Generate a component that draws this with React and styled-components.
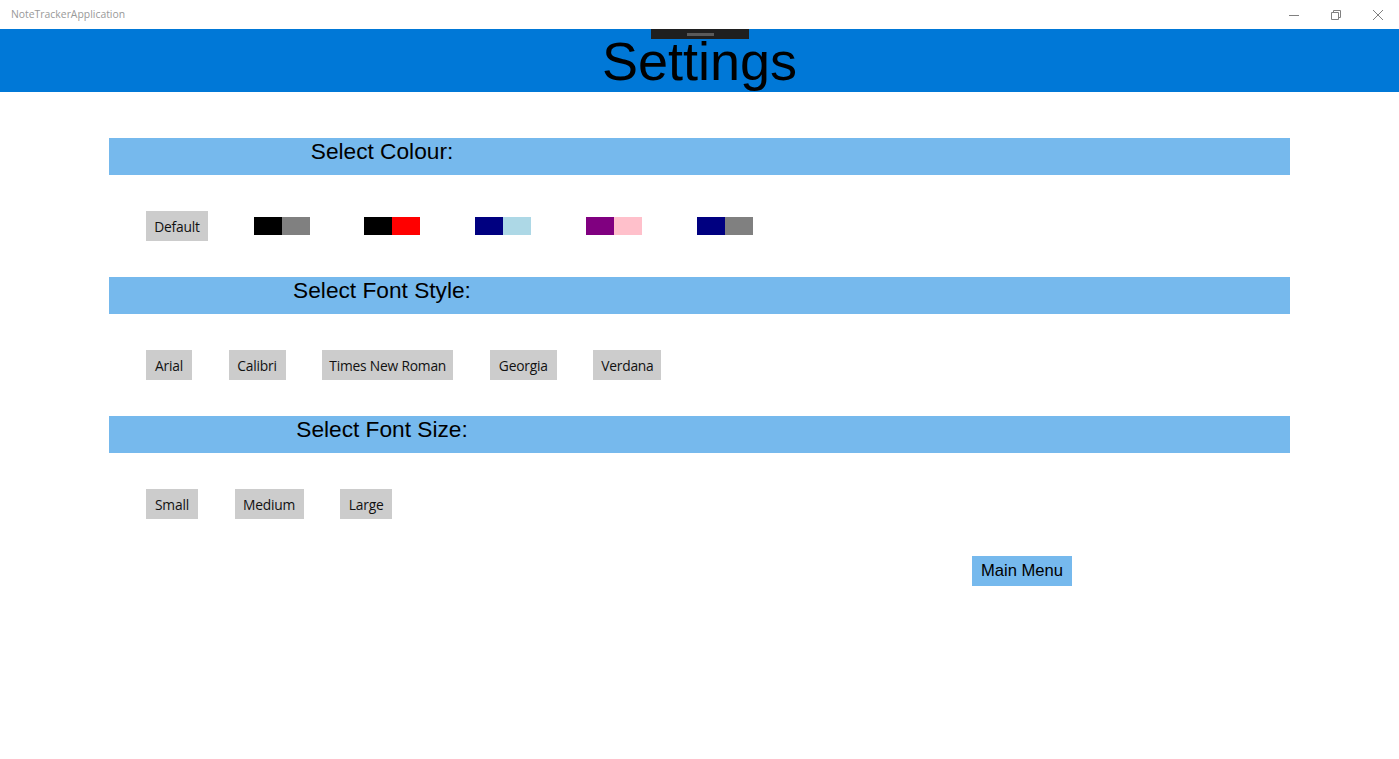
import React from "react";
import styled, { createGlobalStyle } from "styled-components";

const Global = createGlobalStyle`
	html, body {
		margin: 0;
		padding: 0;
		background: #fff;
	}
	body {
		font-family: "Liberation Sans", Arial, sans-serif;
	}
`;

const Window = styled.div`
	width: 1399px;
	height: 759px;
	background: #fff;
	display: flex;
	flex-direction: column;
	overflow: hidden;
`;

const TitleBar = styled.div`
	height: 29px;
	display: flex;
	align-items: center;
	justify-content: space-between;
	padding-left: 11px;
	box-sizing: border-box;
`;

const AppName = styled.span`
	font-family: "Open Sans", "Noto Sans", sans-serif;
	font-size: 10.4px;
	color: #999;
	padding-bottom: 1px;
`;

const Controls = styled.div`
	display: flex;
	height: 29px;
`;

const Control = styled.div`
	width: 42px;
	height: 29px;
	display: flex;
	align-items: center;
	justify-content: center;
	color: #808080;
`;

const Header = styled.header`
	position: relative;
	height: 63px;
	background: #0078d7;
	display: flex;
	justify-content: center;
`;

const Grip = styled.div`
	position: absolute;
	top: 0;
	left: 651px;
	width: 98px;
	height: 10px;
	background: #1f1f1f;
	display: flex;
	justify-content: center;
	padding-top: 4px;
	box-sizing: border-box;
	&::after {
		content: "";
		width: 27px;
		height: 3px;
		background: #5a5a5a;
	}
`;

const Title = styled.h1`
	margin: 0;
	font-family: "Liberation Sans", Arial, sans-serif;
	font-weight: 400;
	font-size: 54px;
	line-height: 63px;
	padding-top: 1px;
	color: #000;
`;

const Content = styled.main`
	padding: 46px 109px 0;
	display: flex;
	flex-direction: column;
`;

const SectionBar = styled.div`
	height: 37px;
	background: #76b9ed;
	margin-bottom: 36px;
`;

const SectionLabel = styled.div`
	width: 546px;
	text-align: center;
	font-size: 22.7px;
	line-height: 26px;
	color: #000;
`;

const Row = styled.div`
	display: flex;
	align-items: center;
	gap: 36.6px;
	padding-left: 37px;
	height: 30px;
	margin-bottom: 36px;
`;

const OptionButton = styled.button`
	width: ${(p) => p.$w}px;
	height: 30px;
	border: 0;
	padding: 0;
	background: #cccccc;
	color: #111;
	font-family: "Open Sans", "Noto Sans", sans-serif;
	font-size: 13.8px;
	letter-spacing: -0.2px;
	cursor: pointer;
`;

const SwatchButton = styled.button`
	width: 74.2px;
	height: 30px;
	border: 0;
	padding: 0;
	background: transparent;
	display: flex;
	align-items: center;
	justify-content: center;
	cursor: pointer;
`;

const Half = styled.span`
	width: 28px;
	height: 18px;
	background: ${(p) => p.$c};
`;

const Footer = styled.div`
	display: flex;
	padding-left: 863px;
	margin-top: 1px;
`;

const MainMenu = styled.button`
	width: 100px;
	height: 30px;
	border: 0;
	padding: 0;
	background: #76b9ed;
	color: #000;
	font-family: "Liberation Sans", Arial, sans-serif;
	font-size: 16.6px;
	cursor: pointer;
`;

const swatches = [
	["#000000", "#808080"],
	["#000000", "#ff0000"],
	["#000080", "#add8e6"],
	["#800080", "#ffc0cb"],
	["#000080", "#808080"],
];

const fonts = [
	["Arial", 46],
	["Calibri", 57],
	["Times New Roman", 131],
	["Georgia", 67],
	["Verdana", 68],
];

const sizes = [
	["Small", 52],
	["Medium", 69],
	["Large", 52],
];

const Section = ({ label }) => (
	<SectionBar>
		<SectionLabel>{label}</SectionLabel>
	</SectionBar>
);

const App = () => {
	return (
		<>
			<Global />
			<Window>
				<TitleBar>
					<AppName>NoteTrackerApplication</AppName>
					<Controls>
						<Control>
							<svg width="10" height="10" viewBox="0 0 10 10">
								<path d="M0 5.5h10" stroke="currentColor" strokeWidth="1" />
							</svg>
						</Control>
						<Control>
							<svg width="10" height="10" viewBox="0 0 10 10" fill="none">
								<path d="M0.5 2.5h7v7h-7z" stroke="currentColor" strokeWidth="1" />
								<path d="M2.5 2.5v-2h7v7h-2" stroke="currentColor" strokeWidth="1" />
							</svg>
						</Control>
						<Control>
							<svg width="10" height="10" viewBox="0 0 10 10">
								<path d="M0 0L10 10M10 0L0 10" stroke="currentColor" strokeWidth="1" />
							</svg>
						</Control>
					</Controls>
				</TitleBar>
				<Header>
					<Grip />
					<Title>Settings</Title>
				</Header>
				<Content>
					<Section label="Select Colour:" />
					<Row>
						<OptionButton $w={62}>Default</OptionButton>
						{swatches.map(([a, b], i) => (
							<SwatchButton key={i}>
								<Half $c={a} />
								<Half $c={b} />
							</SwatchButton>
						))}
					</Row>
					<Section label="Select Font Style:" />
					<Row>
						{fonts.map(([name, w]) => (
							<OptionButton key={name} $w={w}>
								{name}
							</OptionButton>
						))}
					</Row>
					<Section label="Select Font Size:" />
					<Row>
						{sizes.map(([name, w]) => (
							<OptionButton key={name} $w={w}>
								{name}
							</OptionButton>
						))}
					</Row>
					<Footer>
						<MainMenu>Main Menu</MainMenu>
					</Footer>
				</Content>
			</Window>
		</>
	);
};

export default App;
